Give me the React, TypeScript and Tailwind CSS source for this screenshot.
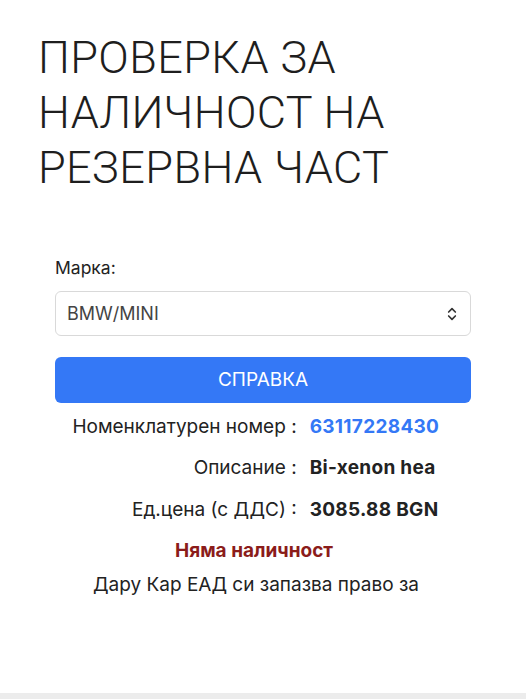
import { ChevronsUpDown } from 'lucide-react';

const rows = [
  { label: 'Номенклатурен номер :', value: '63117228430', cls: 'text-[#3478f6]' },
  { label: 'Описание :', value: 'Bi-xenon hea', cls: 'text-[#222]' },
  { label: 'Ед.цена (с ДДС) :', value: '3085.88 BGN', cls: 'text-[#222]' },
];

export default function App() {
  return (
    <div className="w-[526px] h-[699px] bg-white flex flex-col overflow-hidden font-['Inter',sans-serif]">
      {/* Heading */}
      <h1 className="pl-[38px] pt-[30px] text-[45px] leading-[55px] font-light text-[#1e1e1e] font-['Roboto',sans-serif] tracking-[0.4px]">
        ПРОВЕРКА ЗА
        <br />
        НАЛИЧНОСТ НА
        <br />
        РЕЗЕРВНА ЧАСТ
      </h1>

      <div className="mx-[55px] mt-[61px] flex flex-col">
        <label className="text-[17.5px] leading-[24px] text-[#222]">Марка:</label>

        <div className="mt-[11px] h-[45px] rounded-[6px] border border-[#d9d9d9] flex items-center justify-between pl-[11px] pr-[10px]">
          <span className="text-[18px] text-[#444]">BMW/MINI</span>
          <ChevronsUpDown size={16} strokeWidth={2.5} className="text-[#333]" />
        </div>

        <button className="mt-[21px] h-[46px] rounded-[6px] bg-[#3478f6] text-white text-[19px]">
          СПРАВКА
        </button>

        <div className="mt-[3px] flex flex-col">
          {rows.map(r => (
            <div key={r.label} className="grid grid-cols-12 h-[41.5px] items-center text-[19px]">
              <div className="col-span-7 text-right pr-[1px] text-[#222] whitespace-nowrap">{r.label}</div>
              <div className={`col-span-5 pl-[12px] font-bold tracking-[0.3px] whitespace-nowrap ${r.cls}`}>{r.value}</div>
            </div>
          ))}
        </div>

        <div className="h-[42px] flex items-center pl-[120px] text-[19px] font-bold text-[#8b1c1a]">
          Няма наличност
        </div>

        {/* disclaimer, cut off by the viewport */}
        <div className="h-[25px] overflow-hidden pr-[14px]">
          <p className="text-center text-[19px] leading-[23px] text-[#222] whitespace-nowrap">
            Дару Кар ЕАД си запазва право за
          </p>
        </div>
      </div>

      <div className="mt-auto h-[6px] bg-[#ececec]" />
    </div>
  );
}
